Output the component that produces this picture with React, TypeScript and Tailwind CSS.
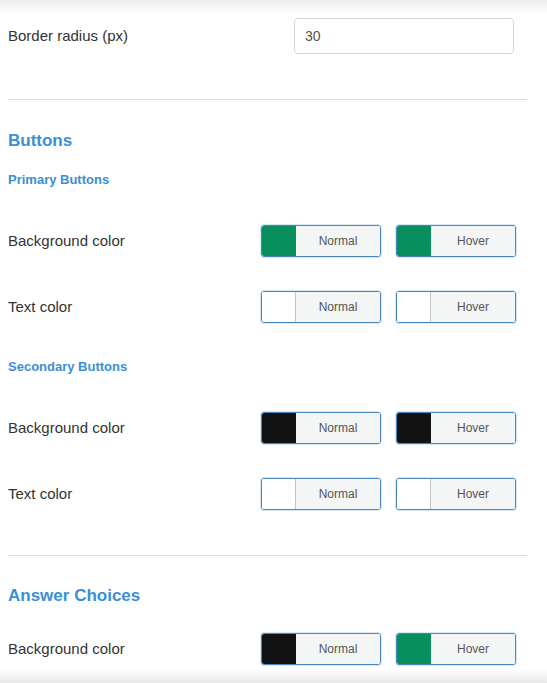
import React from "react";

function Swatch({ color, label, dark }: { color: string; label: string; dark?: boolean }) {
  return (
    <div className="flex h-[32px] w-[120px] overflow-hidden rounded-[3px] border border-[#4a86c0] shadow-[0_0_0_1px_rgba(140,185,225,0.35)]">
      <div
        className={`h-full w-[34px] shrink-0 ${dark ? "" : "border-r border-[#c4c4c4]"}`}
        style={{ backgroundColor: color }}
      />
      <div className="flex flex-1 items-center justify-center bg-[#f4f5f5] text-[12px] text-[#555]">{label}</div>
    </div>
  );
}

function Row({ label, normal, hover }: { label: string; normal: string; hover: string }) {
  const isDark = (c: string) => c !== "#ffffff";
  return (
    <div className="flex h-[32px] items-center">
      <div className="flex-1 text-[15px] text-[#333]">{label}</div>
      <div className="flex gap-[15px] pr-[11px]">
        <Swatch color={normal} label="Normal" dark={isDark(normal)} />
        <Swatch color={hover} label="Hover" dark={isDark(hover)} />
      </div>
    </div>
  );
}

export default function App() {
  const green = "#078f5e";
  const black = "#121212";
  const white = "#ffffff";
  return (
    <div className="relative h-[683px] w-[547px] overflow-hidden bg-white font-['Liberation_Sans',Arial,sans-serif]">
      <div className="pl-[8px] pr-[20px] pt-[18px]">
        <div className="flex h-[36px] items-center">
          <div className="w-[286px] text-[15px] text-[#333]">Border radius (px)</div>
          <div className="flex h-[36px] w-[220px] items-center rounded-[4px] border border-[#d6d6d6] px-[10px] text-[14px] text-[#555]">
            30
          </div>
        </div>
        <div className="mt-[45px] h-px bg-[#d9d9d9]" />
        <div className="mt-[29px] text-[17px] font-bold leading-[24px] text-[#3a8fd6]">Buttons</div>
        <div className="mt-[18px] text-[13px] font-bold leading-[18px] text-[#3a8fd6]">Primary Buttons</div>
        <div className="mt-[36px]">
          <Row label="Background color" normal={green} hover={green} />
        </div>
        <div className="mt-[34px]">
          <Row label="Text color" normal={white} hover={white} />
        </div>
        <div className="mt-[35px] text-[13px] font-bold leading-[18px] text-[#3a8fd6]">Secondary Buttons</div>
        <div className="mt-[36px]">
          <Row label="Background color" normal={black} hover={black} />
        </div>
        <div className="mt-[34px]">
          <Row label="Text color" normal={white} hover={white} />
        </div>
        <div className="mt-[45px] h-px bg-[#d9d9d9]" />
        <div className="mt-[28px] text-[17px] font-bold leading-[24px] text-[#3a8fd6]">Answer Choices</div>
        <div className="mt-[25px]">
          <Row label="Background color" normal={black} hover={green} />
        </div>
      </div>
      <div className="pointer-events-none absolute left-0 right-0 top-0 h-[14px] bg-gradient-to-b from-[#ececec] to-transparent" />
      <div className="pointer-events-none absolute left-0 right-0 bottom-0 h-[14px] bg-gradient-to-t from-[#e8e8e8] to-transparent" />
    </div>
  );
}
